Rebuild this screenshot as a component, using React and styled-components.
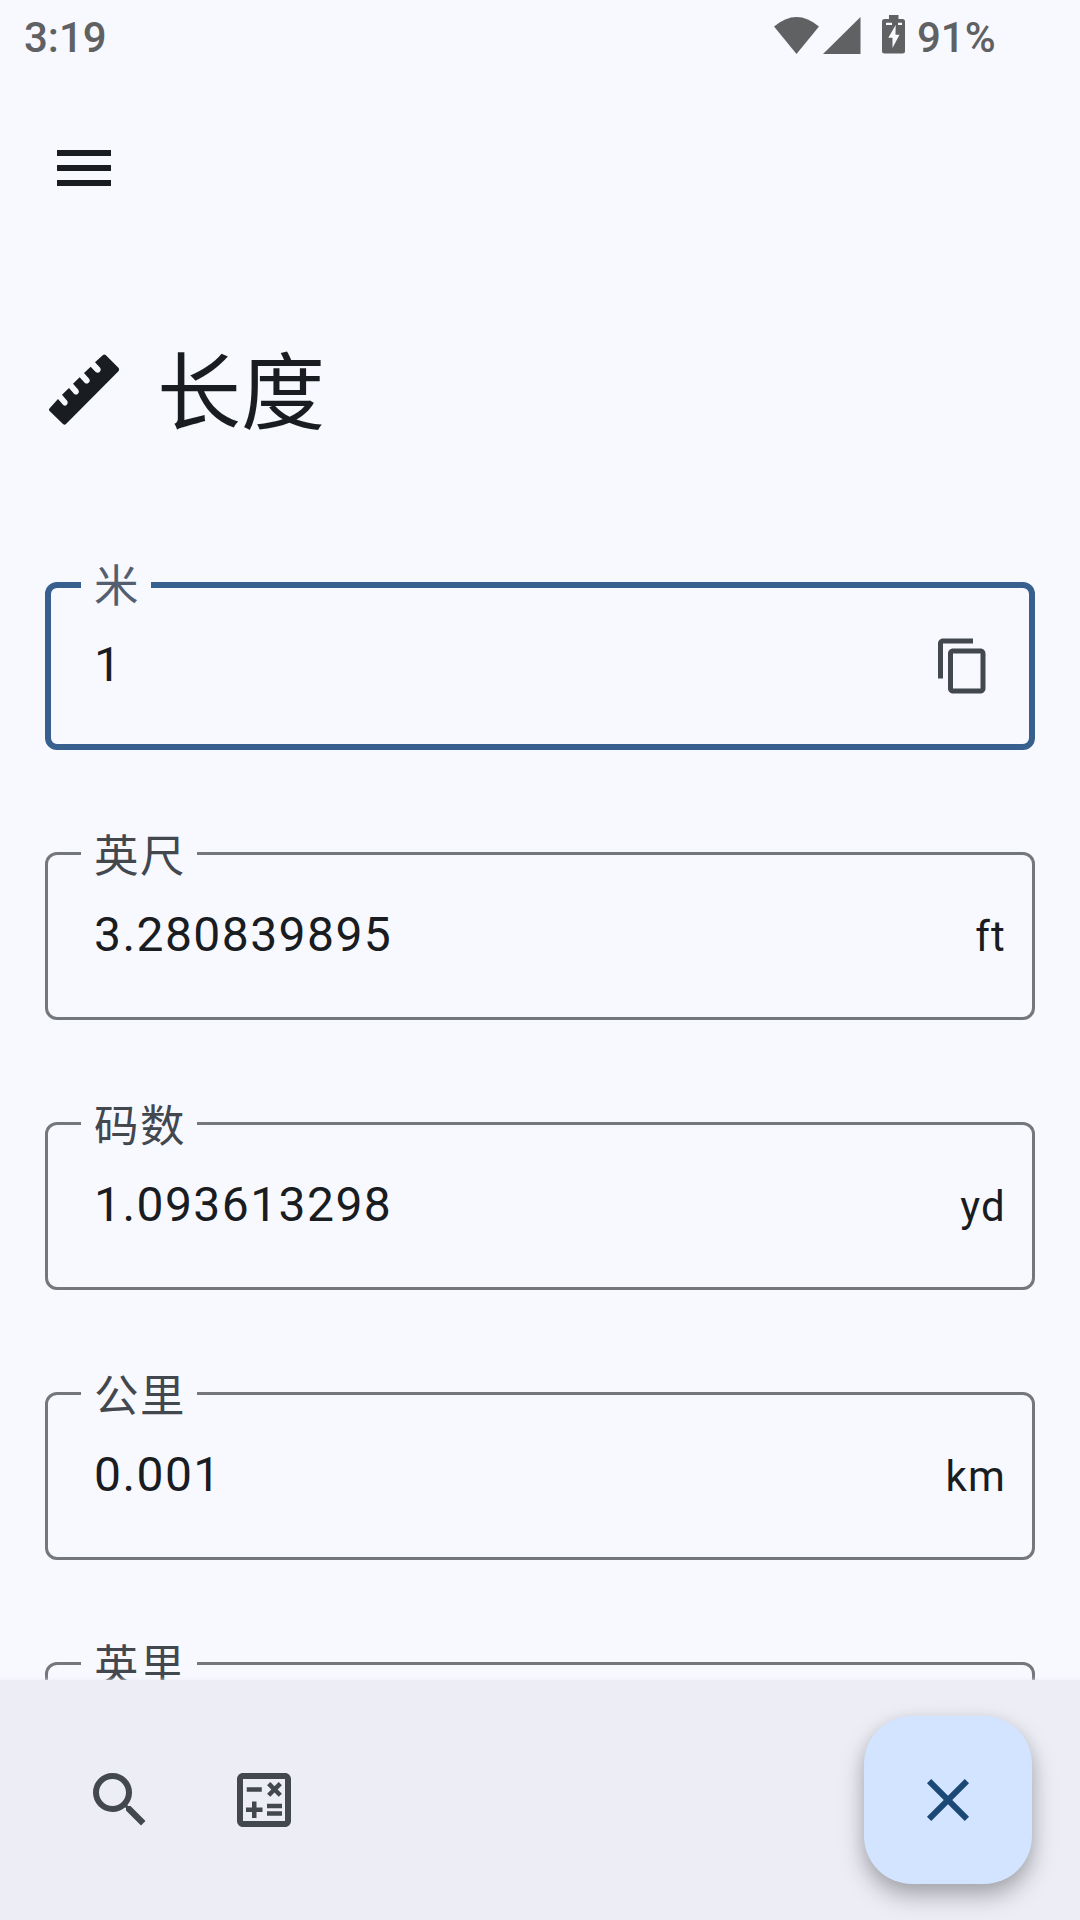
import styled, {createGlobalStyle, css} from "styled-components";
import {MdClose, MdContentCopy, MdMenu, MdOutlineCalculate, MdSearch} from "react-icons/md";

const colors = {
    surface: '#f8f9ff',
    bar: '#ecedf5',
    text: '#191c20',
    muted: '#43474e',
    outline: '#74777c',
    primary: '#38608f',
    status: '#5f6163',
    fab: '#d2e4ff',
    fabIcon: '#1c4875',
};

const GlobalStyle = createGlobalStyle`
  body {
    margin: 0;
    background: ${colors.surface};
    color: ${colors.text};
    font-family: Roboto, "Noto Sans CJK SC", sans-serif;
  }
`

const Screen = styled.div`
  display: flex;
  flex-direction: column;
  width: 1080px;
  height: 1920px;
  overflow: hidden;
  background: ${colors.surface};
`

const StatusBar = styled.div`
  display: flex;
  align-items: center;
  box-sizing: border-box;
  height: 72px;
  padding: 3px 84px 0 24px;
  color: ${colors.status};
  font-size: 42px;
  font-weight: 500;
  line-height: 1;
`

const StatusIcons = styled.div`
  display: flex;
  align-items: center;
  margin-left: auto;

  svg {
    margin-top: -5px;
  }
`

const Percent = styled.span`
  width: 79px;
  margin-left: 11px;
`

const TopBar = styled.div`
  display: flex;
  align-items: center;
  height: 192px;
  padding: 0 48px;
`

const Heading = styled.h1`
  display: flex;
  align-items: center;
  height: 120px;
  margin: 66px 0 0;
  padding-left: 48px;
  gap: 37px;
  font-size: 84px;
  font-weight: 400;
  line-height: 108px;
`

const HeadingText = styled.span`
  padding-top: 10px;
`

const Fields = styled.div`
  display: flex;
  flex: 1;
  flex-direction: column;
  min-height: 0;
  padding: 108px 45px 0;
  gap: 78px;
  overflow: hidden;
`

const Field = styled.fieldset`
  display: flex;
  align-items: flex-start;
  flex: none;
  box-sizing: border-box;
  height: 192px;
  min-width: 0;
  margin: 0;
  padding: 20px 26px 0 46px;
  border: 3px solid ${colors.outline};
  border-radius: 12px;

  ${({$focused}) => $focused && css`
    padding: 17px 36px 0 43px;
    border: 6px solid ${colors.primary};
  `}
`

const Label = styled.legend`
  height: ${({$focused}) => $focused ? '54px' : '51px'};
  margin-left: -13px;
  padding: 0 11px 0 13px;
  color: ${({$focused}) => $focused ? '#535f70' : colors.muted};
  font-size: 44.5px;
  line-height: 58px;
  letter-spacing: 1.5px;
`

const Value = styled.span`
  flex: 1;
  font-size: 48px;
  line-height: 72px;
  letter-spacing: 1.44px;
`

const Unit = styled.span`
  font-size: 42px;
  line-height: 76px;
  letter-spacing: 1.2px;
`

const CopyIcon = styled(MdContentCopy)`
  margin-top: 7px;
  color: ${colors.muted};
`

const BottomBar = styled.div`
  position: relative;
  display: flex;
  align-items: center;
  flex: none;
  box-sizing: border-box;
  height: 240px;
  padding: 0 48px 0 84px;
  gap: 72px;
  background: ${colors.bar};
  color: ${colors.muted};
  box-shadow: 0 0 4px ${colors.bar};
`

const Fab = styled.button`
  display: flex;
  align-items: center;
  justify-content: center;
  width: 168px;
  height: 168px;
  margin-left: auto;
  padding: 0;
  border: none;
  border-radius: 48px;
  background: ${colors.fab};
  color: ${colors.fabIcon};
  box-shadow: 0 12px 24px rgba(0, 0, 0, 0.27), 0 4px 16px rgba(0, 0, 0, 0.08);
`

const units = [
    {label: '米', value: '1', focused: true},
    {label: '英尺', value: '3.280839895', unit: 'ft'},
    {label: '码数', value: '1.093613298', unit: 'yd'},
    {label: '公里', value: '0.001', unit: 'km'},
    {label: '英里'},
];

const Signals = () => (
    <svg width="132" height="40" viewBox="774 15 132 40" fill="currentColor">
        <path d="M774 26.500Q796.500 7.500 819 26.500L796.500 54Z"/>
        <path d="M823 54L860.500 17V54Z"/>
        <path d="M889 15h9.500v4h4q2.500 0 2.500 2.500v29.500q0 2.500-2.500 2.500h-18q-2.500 0-2.500-2.500V21.500q0-2.500 2.500-2.500h4.500z"/>
        <path d="M886 22.700h6v2.200h-6zM898 22.700h4v2.200h-4zM895.700 25L888.300 37.700H892.500V48L899.500 34.700H895.500Z" fill={colors.surface}/>
    </svg>
)

const Ruler = () => (
    <svg width="72" height="72" viewBox="12 12 216 216" fill="currentColor">
        <path d="M17 175L42 147L57 164Q62 170 68 165Q74 160 70 153L54 134L75 114L90 131Q96 136 102 131Q107 126 103 119L87 101L107 82L122 98Q128 103 134 98Q140 93 136 87L120 69L140 50L155 66Q161 71 167 66Q173 61 169 54L153 37L177 15Q181 12 185 15L224 54Q227 58 224 63L66 222Q62 226 57 222L16 182Q13 179 17 175Z"/>
    </svg>
)

const App = () => {
    return (
        <Screen>
            <GlobalStyle/>
            <StatusBar>
                3:19
                <StatusIcons>
                    <Signals/>
                    <Percent>91%</Percent>
                </StatusIcons>
            </StatusBar>
            <TopBar>
                <MdMenu size={72}/>
            </TopBar>
            <Heading>
                <Ruler/>
                <HeadingText>长度</HeadingText>
            </Heading>
            <Fields>
                {units.map(({label, value, unit, focused}) => (
                    <Field key={label} $focused={focused}>
                        <Label $focused={focused}>{label}</Label>
                        <Value>{value}</Value>
                        {focused ? <CopyIcon size={60}/> : <Unit>{unit}</Unit>}
                    </Field>
                ))}
            </Fields>
            <BottomBar>
                <MdSearch size={72}/>
                <MdOutlineCalculate size={72}/>
                <Fab>
                    <MdClose size={72}/>
                </Fab>
            </BottomBar>
        </Screen>
    );
}

export default App;
